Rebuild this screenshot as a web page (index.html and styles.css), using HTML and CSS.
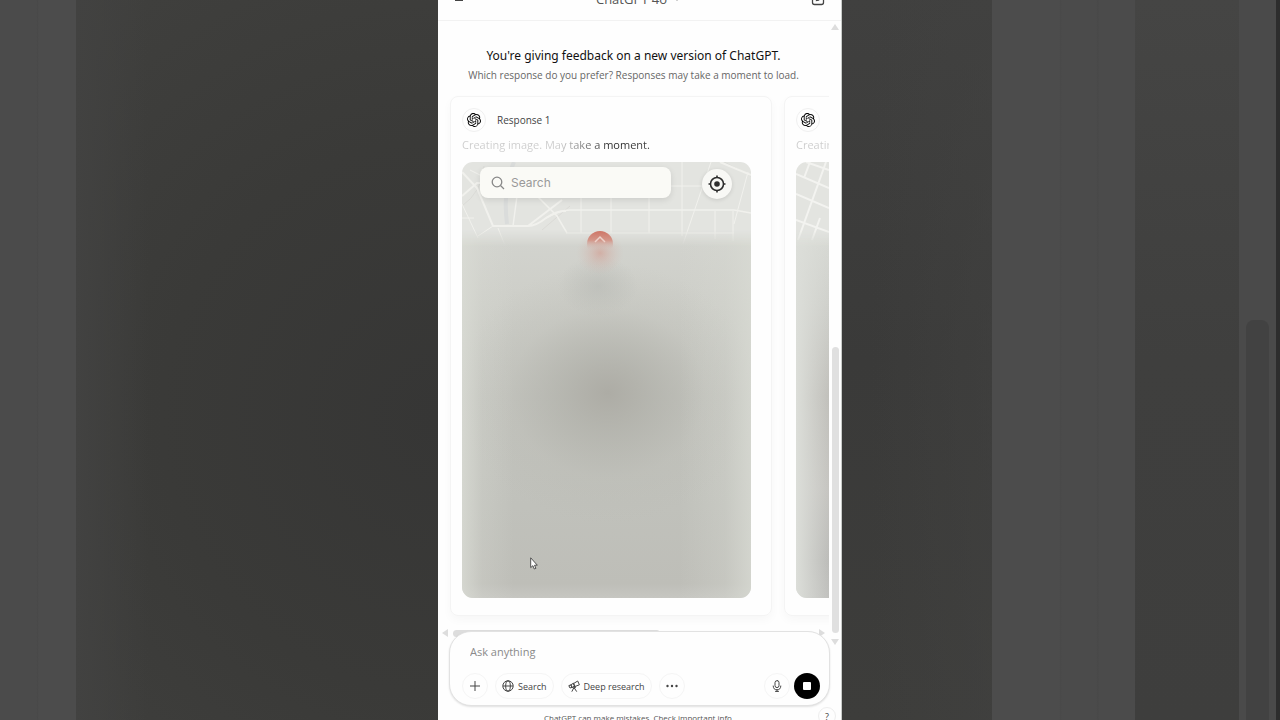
FILE: index.html
```html
<!DOCTYPE html>
<html lang="en">
<head>
  <meta charset="UTF-8">
  <meta name="viewport" content="width=device-width, initial-scale=1.0">
  <title>ChatGPT</title>
  <link rel="stylesheet" href="styles.css">
</head>
<body>
  <!-- shared icons -->
  <svg class="sprite" aria-hidden="true">
    <symbol id="logo" viewBox="0 0 24 24">
      <path d="M22.2819 9.8211a5.9847 5.9847 0 0 0-.5157-4.9108 6.0462 6.0462 0 0 0-6.5098-2.9A6.0651 6.0651 0 0 0 4.9807 4.1818a5.9847 5.9847 0 0 0-3.9977 2.9 6.0462 6.0462 0 0 0 .7427 7.0966 5.98 5.98 0 0 0 .511 4.9107 6.051 6.051 0 0 0 6.5146 2.9001A5.9847 5.9847 0 0 0 13.2599 24a6.0557 6.0557 0 0 0 5.7718-4.2058 5.9894 5.9894 0 0 0 3.9977-2.9001 6.0557 6.0557 0 0 0-.7475-7.0729zm-9.022 12.6081a4.4755 4.4755 0 0 1-2.8764-1.0408l.1419-.0804 4.7783-2.7582a.7948.7948 0 0 0 .3927-.6813v-6.7369l2.02 1.1686a.071.071 0 0 1 .038.052v5.5826a4.504 4.504 0 0 1-4.4945 4.4944zm-9.6607-4.1254a4.4708 4.4708 0 0 1-.5346-3.0137l.142.0852 4.783 2.7582a.7712.7712 0 0 0 .7806 0l5.8428-3.3685v2.3324a.0804.0804 0 0 1-.0332.0615L9.74 19.9502a4.4992 4.4992 0 0 1-6.1408-1.6464zM2.3408 7.8956a4.485 4.485 0 0 1 2.3655-1.9728V11.6a.7664.7664 0 0 0 .3879.6765l5.8144 3.3543-2.0201 1.1685a.0757.0757 0 0 1-.071 0l-4.8303-2.7865A4.504 4.504 0 0 1 2.3408 7.872zm16.5963 3.8558L13.1038 8.364 15.1192 7.2a.0757.0757 0 0 1 .071 0l4.8303 2.7913a4.4944 4.4944 0 0 1-.6765 8.1042v-5.6772a.79.79 0 0 0-.407-.667zm2.0107-3.0231l-.142-.0852-4.7735-2.7818a.7759.7759 0 0 0-.7854 0L9.409 9.2297V6.8974a.0662.0662 0 0 1 .0284-.0615l4.8303-2.7866a4.4992 4.4992 0 0 1 6.6802 4.66zM8.3065 12.863l-2.02-1.1638a.0804.0804 0 0 1-.038-.0567V6.0742a4.4992 4.4992 0 0 1 7.3757-3.4537l-.142.0805L8.704 5.459a.7948.7948 0 0 0-.3927.6813zm1.0976-2.3654l2.602-1.4998 2.6069 1.4998v2.9994l-2.5974 1.4997-2.6067-1.4997Z"/>
    </symbol>
  </svg>

  <div class="stage">
    <div class="backdrop">
      <div class="band band-lines"></div>
      <div class="band-dark-left"></div>
    </div>

    <div class="app">
      <header class="topbar">
        <button class="icon-btn" aria-label="Menu">
          <svg width="12" height="12" viewBox="0 0 12 12" fill="none" stroke="#444"><path d="M1 3.500h10M1 7.500h8"/></svg>
        </button>
        <button class="model">ChatGPT 4o
          <svg width="8" height="8" viewBox="0 0 8 8" fill="none" stroke="#999"><path d="M1 2.500l3 3 3-3"/></svg>
        </button>
        <button class="icon-btn" aria-label="New chat">
          <svg width="14" height="14" viewBox="0 0 14 14" fill="none" stroke="#444" stroke-width="1.300"><path d="M7 1.500H3.500a2 2 0 0 0-2 2v7a2 2 0 0 0 2 2h7a2 2 0 0 0 2-2V7M5.500 8.500l.3-2L11 1.300l1.700 1.700L7.500 8.200z"/></svg>
        </button>
      </header>

      <div class="body">
        <div class="column">
          <main class="chat">
            <h1>You're giving feedback on a new version of ChatGPT.</h1>
            <p class="sub">Which response do you prefer? Responses may take a moment to load.</p>

            <div class="cards">
              <section class="card">
                <div class="card-head">
                  <span class="avatar"><svg width="14" height="14"><use href="#logo"/></svg></span>
                  <h2>Response 1</h2>
                </div>
                <p class="status"><span>Creating image. May take a moment.</span></p>
                <div class="picture">
                  <svg class="map" viewBox="0 0 289 86" preserveAspectRatio="xMinYMin slice" fill="none" stroke="#f1f1ed">
                    <path stroke="#dadcdb" stroke-width="4" d="M52 0c-8 18-10 38-7 62"/>
                    <path stroke="#dadad6" d="M80 68L108 44M0 44q20-14 22-40M262 0l27 14"/>
                    <path stroke-width="2" d="M0 10l15 16 16 38M0 34l15-13h10M31 64h35q8 0 18-8 12-8 20-7M66 64l34-26M258 0l31 13"/>
                    <path stroke-width="1.500" d="M84 56q14-8 24-8h164l17 3M75 34l20 20 10 17M55 34l-4 30"/>
                    <path d="M0 42l16 34M36 66l8 20M104 71h168M119 34v37M149 34v37M187 34v37M220 0v74M209 24h32M249 0l-28 82M286 10l-14 52M253 49v28M271 49v30M31 64l-15 10M20 14L8 8M0 56l12 0"/>
                  </svg>
                  <div class="pending"></div>
                  <svg class="pin" width="60" height="64" viewBox="0 0 60 64">
                    <defs>
                      <linearGradient id="pinFill" x2="0" y2="1">
                        <stop offset="0" stop-color="#cf7566"/>
                        <stop offset=".35" stop-color="#d39588"/>
                        <stop offset=".7" stop-color="#d3bab2" stop-opacity="0"/>
                      </linearGradient>
                      <radialGradient id="pinHaze">
                        <stop offset="0" stop-color="#d28c7e" stop-opacity=".5"/>
                        <stop offset="1" stop-color="#d3b8b0" stop-opacity="0"/>
                      </radialGradient>
                    </defs>
                    <ellipse cx="30" cy="26" rx="24" ry="22" fill="url(#pinHaze)"/>
                    <circle cx="30" cy="17" r="13" fill="url(#pinFill)"/>
                    <path d="M25 15l5-5 5 5" fill="none" stroke="#ecd0c8" stroke-width="1.500"/>
                  </svg>
                  <div class="map-tools">
                    <label class="map-search">
                      <svg width="14" height="14" viewBox="0 0 14 14" fill="none" stroke="#888" stroke-width="1.300"><circle cx="6" cy="6" r="4.800"/><path d="M9.500 9.500l3.500 3.500"/></svg>
                      <input type="text" placeholder="Search" aria-label="Search map">
                    </label>
                    <button class="locate" aria-label="Locate me">
                      <svg width="18" height="18" viewBox="0 0 18 18" fill="none" stroke="#2e2e2e" stroke-width="1.600"><circle cx="9" cy="9" r="6.500"/><circle cx="9" cy="9" r="2" fill="#2e2e2e"/><path d="M9 .5v2.500M9 15v2.500M.5 9H3M15 9h2.500"/></svg>
                    </button>
                  </div>
                </div>
              </section>

              <section class="card">
                <div class="card-head">
                  <span class="avatar"><svg width="14" height="14"><use href="#logo"/></svg></span>
                </div>
                <p class="status"><span>Creating image. May take a moment.</span></p>
                <div class="picture picture-two">
                  <svg class="map" viewBox="0 0 289 86" preserveAspectRatio="xMinYMin slice" fill="none" stroke="#f3f3f0" stroke-width="2">
                    <path d="M0 12l33 14M0 32l33 14M0 58l33 12M14 0L8 16M30 0L2 78M24 56l-8 22M10 0l23 8"/>
                  </svg>
                  <div class="pending"></div>
                </div>
              </section>
            </div>
          </main>

          <div class="hscroll"><i class="arrow left"></i><i class="hthumb"></i><i class="arrow right"></i></div>

          <form class="composer">
            <input class="prompt" type="text" placeholder="Ask anything" aria-label="Ask anything">
            <div class="tools">
              <button type="button" class="pill round" aria-label="Add">
                <svg width="12" height="12" viewBox="0 0 12 12" fill="none" stroke="#444"><path d="M6 1v10M1 6h10"/></svg>
              </button>
              <button type="button" class="pill">
                <svg width="12" height="12" viewBox="0 0 12 12" fill="none" stroke="#444"><circle cx="6" cy="6" r="5.200"/><ellipse cx="6" cy="6" rx="2.300" ry="5.200"/><path d="M1 6h10"/></svg>
                Search
              </button>
              <button type="button" class="pill">
                <svg width="12" height="12" viewBox="0 0 12 12" fill="none" stroke="#444" stroke-linejoin="round" stroke-linecap="round"><path d="M1 6l1 2 2-.6-1-2.200zM3 5.200l1 2.200 3-.9-1.300-3zM5.700 3.500L9.700 1l1.700 3.800L7 6.500z"/><circle cx="6" cy="7.500" r="1"/><path d="M5.500 8.400L4 11.300M6.600 8.400L8.500 11.300"/></svg>
                Deep research
              </button>
              <button type="button" class="pill round" aria-label="More">
                <svg width="12" height="12" viewBox="0 0 12 12" fill="#444"><circle cx="1.500" cy="6" r="1.200"/><circle cx="6" cy="6" r="1.200"/><circle cx="10.500" cy="6" r="1.200"/></svg>
              </button>
              <button type="button" class="pill round mic" aria-label="Dictate">
                <svg width="12" height="12" viewBox="0 0 12 12" fill="none" stroke="#444" stroke-linecap="round"><rect x="4" y=".6" width="4" height="7" rx="2"/><path d="M2.200 6a3.800 3.800 0 0 0 7.600 0M6 9.800v1.600M4.500 11.400h3"/></svg>
              </button>
              <button type="button" class="stop" aria-label="Stop"><i></i></button>
            </div>
          </form>
          <p class="note">ChatGPT can make mistakes. Check important info.</p>
        </div>

        <div class="vscroll"><i class="arrow up"></i><i class="vthumb"></i><i class="arrow down"></i></div>
      </div>

      <button class="help" aria-label="Help">?</button>
      <svg class="cursor" width="8" height="13" viewBox="0 0 8 13"><path d="M.7.800v9.800l2.200-1.900 1.400 3.300 1.600-.7-1.400-3.100h2.800z" fill="#fff" stroke="#444" stroke-width=".9"/></svg>
    </div>

    <div class="backdrop">
      <div class="band-dark-mid"></div>
      <div class="band band-gap"></div>
      <div class="band-dark-right"></div>
      <div class="band-scroll"><i></i></div>
      <div class="band-edge"></div>
    </div>
  </div>
</body>
</html>
```

FILE: styles.css
```css
* {
  box-sizing: border-box;
}

body {
  margin: 0;
  height: 100vh;
  overflow: hidden;
  background: #3c3c3b;
  color: #444;
  font-family: "Open Sans", "Noto Sans", sans-serif;
  font-size: 11px;
}

h1, h2, p {
  margin: 0;
  font-weight: 400;
}

button, input {
  font: inherit;
  color: inherit;
  border: none;
  padding: 0;
  background: none;
}

svg {
  display: block;
  flex: none;
}

.sprite {
  position: absolute;
  width: 0;
  height: 0;
}

.stage {
  display: grid;
  grid-template-columns: 1fr minmax(0, 404px) 1fr;
  grid-template-rows: 100vh;
}

/* darkened enlargement behind the app */
.backdrop {
  display: flex;
}

.band {
  background: #4b4b4b;
}

.band-lines {
  flex: 76;
  background: linear-gradient(90deg, #4b4b4b 48%, #484848 49%, #4c4c4c 51%);
}

.band-dark-left {
  flex: 362;
  background: linear-gradient(90deg, #424241, rgba(62, 62, 60, 0) 20%), radial-gradient(circle at 100% 58%, #363635, #3a3a38 50%, #40403e 100%);
}

.band-dark-mid {
  flex: 150;
  background: linear-gradient(90deg, rgba(66, 66, 65, 0) 20%, rgba(66, 66, 65, 0.5)), linear-gradient(#40403f, #3a3a39 50%, #3d3d3b);
}

.band-gap {
  flex: 143;
  background: linear-gradient(90deg, #4c4c4c 47%, #494949 48%, #4b4b4b 49%, #4b4b4b 73%, #484848 74%, #4b4b4b 75%);
}

.band-dark-right {
  flex: 104;
  background: linear-gradient(#454544, #3f3f3e 50%, #3e3e3d);
}

.band-scroll {
  display: flex;
  flex: 37;
  justify-content: center;
  align-items: flex-end;
  background: #4a4a4a;
}

.band-scroll i {
  width: 60%;
  height: 400px;
  border-radius: 8px 8px 0 0;
  background: #424242;
}

.band-edge {
  flex: 4;
  background: #2d2d2d;
}

/* app column, scrolled slightly past the window at both ends */
.app {
  position: relative;
  display: flex;
  flex-direction: column;
  height: calc(100vh + 28px);
  margin-top: -22px;
  background: #fefefe;
  border-right: 1px solid #c9ccc9;
}

.topbar {
  display: flex;
  flex: none;
  align-items: center;
  justify-content: space-between;
  height: 43px;
  padding: 0 16px;
  border-bottom: 1px solid #f2f2f2;
}

.model {
  display: flex;
  align-items: center;
  gap: 6px;
  font-size: 13px;
  font-weight: 500;
  color: #555;
}

.body {
  display: flex;
  flex: 1;
  min-height: 0;
}

.column {
  display: flex;
  flex: 1;
  flex-direction: column;
  min-width: 0;
}

.chat {
  flex: 1;
  min-height: 0;
  padding: 25px 0 0 12px;
  overflow: hidden;
}

h1 {
  margin-left: -12px;
  font-family: "Noto Sans", sans-serif;
  font-size: 12px;
  line-height: 20px;
  text-align: center;
  color: #111;
}

.sub {
  margin-left: -12px;
  font-size: 10px;
  line-height: 18px;
  text-align: center;
  color: #666;
}

.cards {
  display: flex;
  gap: 12px;
  margin-top: 12px;
}

.card {
  flex: none;
  width: 322px;
  padding: 11px 20px 17px 11px;
  border: 1px solid #f4f4f4;
  border-radius: 8px;
  box-shadow: 0 4px 10px rgba(0, 0, 0, 0.03);
}

.card-head {
  display: flex;
  align-items: center;
  gap: 11px;
  height: 24px;
}

.avatar {
  display: grid;
  place-items: center;
  width: 24px;
  height: 24px;
  border: 1px solid #f0f0f0;
  border-radius: 50%;
}

h2 {
  font-size: 10px;
  font-weight: 500;
}

.status {
  margin: 3px 0 7px;
  font-size: 11px;
  line-height: 20px;
  white-space: nowrap;
}

.status span {
  background: linear-gradient(90deg, #ccc 52%, #777 66%, #222 80%, #444);
  background-clip: text;
  -webkit-background-clip: text;
  color: transparent;
}

/* generated image, lower part still loading */
.picture {
  position: relative;
  height: 436px;
  border-radius: 11px;
  overflow: hidden;
  background: #e3e4e0;
}

.map {
  width: 289px;
  height: 86px;
}

.pending {
  position: absolute;
  inset: 68px 0 0;
  background:
    linear-gradient(90deg, rgba(218, 220, 213, 0.8), rgba(218, 220, 213, 0.25) 7%, rgba(218, 220, 213, 0) 18%, rgba(216, 218, 211, 0) 75%, rgba(216, 218, 211, 0.3) 91%, rgba(216, 218, 211, 0.8)),
    radial-gradient(ellipse 40px 30px at 136px 56px, rgba(180, 182, 177, 0.5), rgba(180, 182, 177, 0)),
    radial-gradient(ellipse 150px 130px at 146px 163px, #adaca5, rgba(175, 175, 168, 0.65) 30%, rgba(184, 184, 177, 0.25) 65%, rgba(190, 190, 184, 0)),
    linear-gradient(#d3d4cf, #cdcec8 20%, #c3c4be 45%, #c0c1bb 75%, #bebeb8 96%, #c6c6c1);
  mask-image: linear-gradient(transparent, #000 16px);
}

.picture-two .pending {
  background:
    linear-gradient(90deg, #dcded9, rgba(220, 222, 217, 0) 34px),
    linear-gradient(#d8dad5, #cfd0cb 20%, #c0bfba 45%, #c5c4c0 70%, #bbbbb8 90%, #c0c0bd);
}

.pin {
  position: absolute;
  top: 65px;
  left: 108px;
}

.map-tools {
  position: absolute;
  inset: 5px 19px auto 18px;
  display: flex;
  align-items: flex-start;
  justify-content: space-between;
}

.map-search {
  display: flex;
  align-items: center;
  gap: 6px;
  width: 191px;
  height: 31px;
  padding: 0 11px;
  border-radius: 8px;
  background: #fafaf6;
  box-shadow: 0 2px 6px rgba(0, 0, 0, 0.1);
  font-family: Inter, sans-serif;
  font-size: 12px;
}

.map-search input {
  min-width: 0;
}

.map-search input::placeholder {
  color: #999;
}

.locate {
  display: grid;
  place-items: center;
  width: 30px;
  height: 30px;
  margin-top: 2px;
  border-radius: 50%;
  background: #f8f8f5;
  box-shadow: 0 1px 4px rgba(0, 0, 0, 0.12);
}

/* scrollbars */
.hscroll {
  display: flex;
  flex: none;
  align-items: center;
  height: 8px;
  padding: 0 4px;
}

.hthumb {
  width: 207px;
  height: 7px;
  margin: 0 auto 0 5px;
  border-radius: 4px;
  background: #ddd;
}

.vscroll {
  display: flex;
  flex: none;
  flex-direction: column;
  align-items: center;
  width: 12px;
  height: 625px;
  padding: 3px 0 1px;
}

.vthumb {
  width: 7px;
  height: 286px;
  margin: auto 0 6px;
  border-radius: 4px;
  background: #e0e0e0;
}

.arrow {
  border: 4px solid transparent;
}

.arrow.up {
  border-top: none;
  border-bottom: 6px solid #ddd;
}

.arrow.down {
  border-bottom: none;
  border-top: 6px solid #ddd;
}

.arrow.left {
  border-left: none;
  border-right: 6px solid #ddd;
}

.arrow.right {
  border-right: none;
  border-left: 6px solid #ddd;
}

.composer {
  position: relative;
  flex: none;
  margin: -6px -1px 4px 11px;
  padding: 9px 9px 6px 12px;
  border: 1px solid #e2e2e2;
  border-radius: 22px;
  background: #fefefe;
  box-shadow: 0 1px 2px rgba(0, 0, 0, 0.12);
}

.prompt {
  display: block;
  width: 100%;
  height: 20px;
  margin-bottom: 12px;
  padding-left: 8px;
}

.prompt::placeholder {
  color: #8a8a8a;
}

.tools {
  display: flex;
  align-items: center;
  gap: 7px;
  height: 26px;
}

.pill {
  display: flex;
  align-items: center;
  justify-content: center;
  gap: 4px;
  height: 26px;
  padding: 0 6px;
  border: 1px solid #f5f5f5;
  border-radius: 13px;
  font-size: 9px;
  font-weight: 500;
  white-space: nowrap;
}

.round {
  width: 26px;
  padding: 0;
}

.mic {
  margin-left: auto;
  margin-right: -3px;
}

.stop {
  display: grid;
  place-items: center;
  width: 26px;
  height: 26px;
  border-radius: 50%;
  background: #000;
}

.stop i {
  width: 8px;
  height: 8px;
  border-radius: 1px;
  background: #fff;
}

.note {
  flex: none;
  padding-left: 11px;
  font-size: 8px;
  line-height: 16px;
  text-align: center;
  color: #555;
}

.help {
  position: absolute;
  right: 5px;
  bottom: 1px;
  width: 18px;
  height: 18px;
  border: 1px solid #eee;
  border-radius: 50%;
  background: #fefefe;
  font-size: 9px;
}

.cursor {
  position: absolute;
  top: 579px;
  left: 92px;
}
```
